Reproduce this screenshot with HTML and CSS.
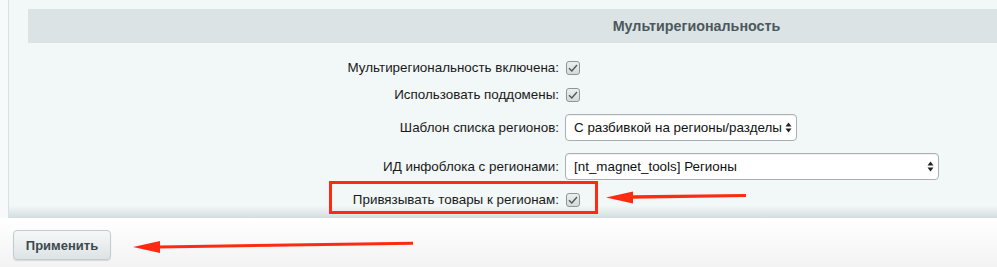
FILE: index.html
```html
<!DOCTYPE html>
<html lang="ru">
<head>
  <meta charset="UTF-8">
  <title>Мультирегиональность</title>
  <link rel="stylesheet" href="styles.css">
</head>
<body>
  <div class="page">
    <div class="panel">
      <div class="section-title">Мультирегиональность</div>

      <div class="form">
        <div class="row">
          <label class="label">Мультирегиональность включена:</label>
          <span class="check"><svg width="10" height="8" viewBox="0 0 10 8"><path d="M1 4.2 L3.8 7 L9 1" fill="none" stroke="#4f5a5d" stroke-width="1.4"/></svg></span>
        </div>
        <div class="row">
          <label class="label">Использовать поддомены:</label>
          <span class="check"><svg width="10" height="8" viewBox="0 0 10 8"><path d="M1 4.2 L3.8 7 L9 1" fill="none" stroke="#4f5a5d" stroke-width="1.4"/></svg></span>
        </div>
        <div class="row row-select">
          <label class="label">Шаблон списка регионов:</label>
          <div class="select select-short">
            <span>С разбивкой на регионы/разделы</span>
            <svg width="7" height="11" viewBox="0 0 7 11"><path d="M3.5 0.5 L6.5 4.5 L0.5 4.5 Z M3.5 10.5 L6.5 6.5 L0.5 6.5 Z" fill="#222"/></svg>
          </div>
        </div>
        <div class="row row-select row-select-2">
          <label class="label">ИД инфоблока с регионами:</label>
          <div class="select select-long">
            <span>[nt_magnet_tools] Регионы</span>
            <svg width="7" height="11" viewBox="0 0 7 11"><path d="M3.5 0.5 L6.5 4.5 L0.5 4.5 Z M3.5 10.5 L6.5 6.5 L0.5 6.5 Z" fill="#222"/></svg>
          </div>
        </div>
        <div class="row">
          <label class="label">Привязывать товары к регионам:</label>
          <span class="check"><svg width="10" height="8" viewBox="0 0 10 8"><path d="M1 4.2 L3.8 7 L9 1" fill="none" stroke="#4f5a5d" stroke-width="1.4"/></svg></span>
        </div>
      </div>
    </div>

    <div class="footer">
      <button class="btn">Применить</button>
    </div>

    <!-- annotation layer -->
    <svg class="marks" width="997" height="267" viewBox="0 0 997 267">
      <rect x="330.5" y="182.5" width="266" height="30" fill="none" stroke="#ff2a12" stroke-width="3"/>
      <path d="M632 195.2 L746 194 L746 197 L632 198.8 Z" fill="#ff2a12"/>
      <path d="M606 197.5 L633 191.5 L633 203.5 Z" fill="#ff2a12"/>
      <path d="M159 245.5 L413 241.8 L413 244.8 L159 248.5 Z" fill="#ff2a12"/>
      <path d="M133 247 L160 241 L160 253 Z" fill="#ff2a12"/>
    </svg>
  </div>
</body>
</html>
```

FILE: styles.css
```css
body {
  margin: 0;
  font-family: "Liberation Sans", Arial, sans-serif;
  font-size: 13.4px;
  color: #000;
  background: #fff;
}

.page {
  position: relative;
  width: 997px;
  height: 267px;
  overflow: hidden;
  background: #f7f9fa;
}

.panel {
  margin-left: 8px;
  height: 218px;
  box-sizing: border-box;
  border-left: 1px solid #d4e1e8;
  background: #f2f7f7 linear-gradient(to bottom, rgba(214,224,227,0) 206px, #d3dde0 218px);
  padding: 9px 0 0 19px;
}

.section-title {
  height: 34px;
  line-height: 34px;
  background: #dce3e5;
  text-align: center;
  font-size: 14.3px;
  font-weight: bold;
  color: #4b595d;
  padding-left: 368px;
}

.form {
  display: flex;
  flex-direction: column;
  padding-top: 11px;
}

.row {
  display: grid;
  grid-template-columns: 531px 1fr;
  column-gap: 7px;
  align-items: center;
  height: 27px;
}

.row-select {
  height: 38px;
}

.row-select-2 {
  height: 40px;
}

.label {
  text-align: right;
  color: #1a1a1a;
}

.check {
  width: 14px;
  height: 14px;
  box-sizing: border-box;
  border: 1px solid #8c9597;
  border-radius: 3px;
  background: linear-gradient(to bottom, #eceff0, #d4d9da);
  display: flex;
  align-items: center;
  justify-content: center;
}

.select {
  height: 27px;
  box-sizing: border-box;
  border: 1px solid #a8b0b3;
  border-radius: 4px;
  background: #fff;
  display: flex;
  align-items: center;
  justify-content: space-between;
  padding: 0 4px 0 8px;
  color: #111;
  box-shadow: inset 0 1px 1px rgba(0,0,0,0.06);
}

.select-short {
  width: 232px;
  margin-left: -1px;
}

.select-long {
  width: 374px;
  margin-left: -1px;
}

.footer {
  height: 49px;
  background: linear-gradient(to bottom, #ffffff, #f3f3f3);
  padding: 12px 0 0 13px;
  box-sizing: border-box;
}

.btn {
  width: 98px;
  height: 30px;
  border: 1px solid #c3cbce;
  border-radius: 4px;
  background: linear-gradient(to bottom, #f6f8f8, #dde3e5);
  box-shadow: 0 1px 1px rgba(0,0,0,0.12);
  font-family: "Liberation Sans", Arial, sans-serif;
  font-size: 13px;
  font-weight: bold;
  color: #3d494c;
  padding: 0;
}

.marks {
  position: absolute;
  left: 0;
  top: 0;
  pointer-events: none;
}
```
